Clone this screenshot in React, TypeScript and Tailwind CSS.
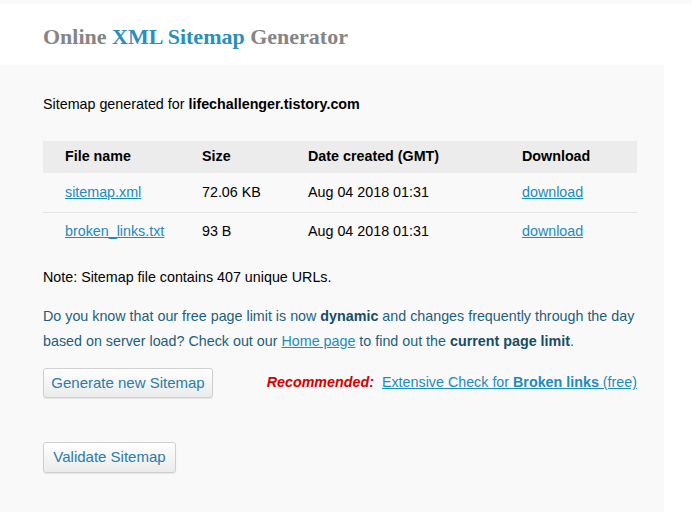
import React from "react";

const files = [
  { name: "sitemap.xml", size: "72.06 KB", date: "Aug 04 2018 01:31" },
  { name: "broken_links.txt", size: "93 B", date: "Aug 04 2018 01:31" },
];

const App: React.FC = () => {
  return (
    <div className="min-h-[512px] w-[692px] bg-white font-['Liberation_Sans',Arial,sans-serif] text-[14.3px] text-black">
      <div className="h-[4px] bg-[#fafafa]" />
      {/* Header */}
      <div className="h-[61px] pl-[43px] pt-[19px]">
        <h1 className="font-['Liberation_Serif','Times_New_Roman',serif] text-[22px] font-bold leading-[28px] text-[#858585]">
          Online <span className="text-[#2a8fbd]">XML Sitemap</span> Generator
        </h1>
      </div>

      {/* Main panel */}
      <div className="w-[664px] min-h-[447px] bg-[#f9f9f9] pl-[43px] pr-[27px] pt-[29px]">
        <p className="leading-[20px]">
          Sitemap generated for <b>lifechallenger.tistory.com</b>
        </p>

        <table className="mt-[27px] w-[594px] border-collapse">
          <thead>
            <tr className="h-[32px] bg-[#ececec] text-left">
              <th className="w-[137px] pl-[22px] font-bold">File name</th>
              <th className="w-[106px] pl-[22px] font-bold">Size</th>
              <th className="w-[214px] pl-[22px] font-bold">Date created (GMT)</th>
              <th className="pl-[22px] font-bold">Download</th>
            </tr>
          </thead>
          <tbody>
            {files.map((f) => (
              <tr key={f.name} className="h-[39px] border-b border-[#e6e6e6] last:border-b-0">
                <td className="pl-[22px]">
                  <a href="#" className="text-[#1b8bc0] underline">
                    {f.name}
                  </a>
                </td>
                <td className="pl-[22px]">{f.size}</td>
                <td className="pl-[22px]">{f.date}</td>
                <td className="pl-[22px]">
                  <a href="#" className="text-[#1b8bc0] underline">
                    download
                  </a>
                </td>
              </tr>
            ))}
          </tbody>
        </table>

        <p className="mt-[16px] leading-[20px]">Note: Sitemap file contains 407 unique URLs.</p>

        <p className="mt-[17px] leading-[25px] text-[#1d5f7c]">
          Do you know that our free page limit is now <b className="text-[#174d66]">dynamic</b> and changes frequently
          through the day based on server load? Check out our{" "}
          <a href="#" className="text-[#1b8bc0] underline">
            Home page
          </a>{" "}
          to find out the <b className="text-[#174d66]">current page limit</b>.
        </p>

        <div className="mt-[14px] flex items-center justify-between">
          <button className="h-[30px] w-[170px] rounded-[3px] border border-[#cfcfcf] bg-gradient-to-b from-white to-[#ebebeb] text-[15px] text-[#2b7ca6] shadow-[0_1px_1px_rgba(0,0,0,0.08)]">
            Generate new Sitemap
          </button>
          <div className="flex items-center gap-[8px]">
            <span className="font-bold italic text-[#d40000]">Recommended:</span>
            <a href="#" className="text-[#1b8bc0] underline">
              Extensive Check for <b>Broken links</b> (free)
            </a>
          </div>
        </div>

        <button className="mt-[44px] h-[31px] w-[133px] rounded-[3px] border border-[#cfcfcf] bg-gradient-to-b from-white to-[#ebebeb] text-[15px] text-[#2b7ca6] shadow-[0_1px_1px_rgba(0,0,0,0.08)]">
          Validate Sitemap
        </button>
      </div>
    </div>
  );
};

export default App;
